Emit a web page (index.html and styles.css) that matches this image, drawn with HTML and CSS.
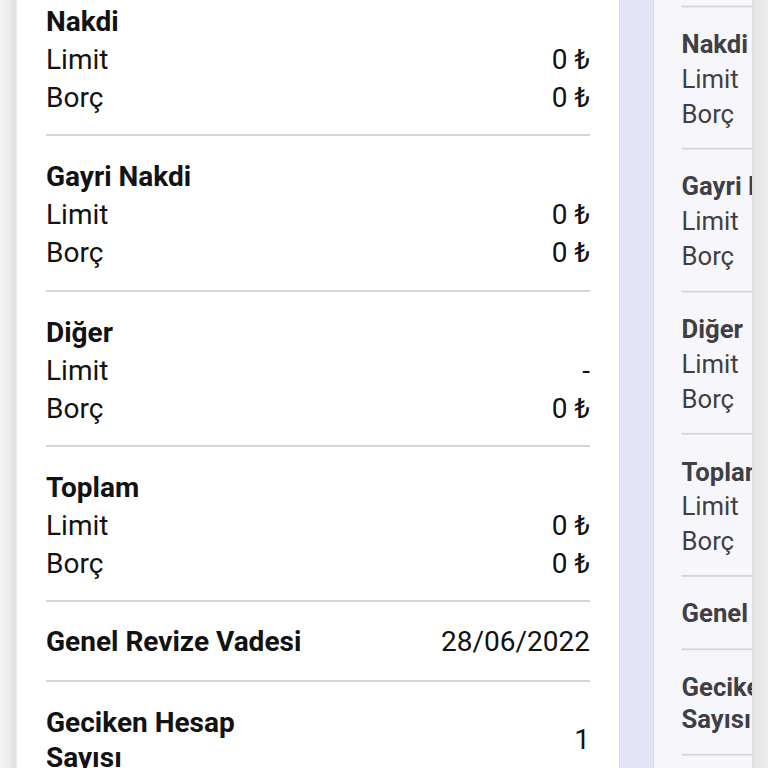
FILE: index.html
```html
<!DOCTYPE html>
<html lang="tr">
<head>
<meta charset="utf-8">
<title>Limitler</title>
<link rel="stylesheet" href="styles.css">
</head>
<body>
<div class="pager">
  <div class="edge edge-left"></div>

  <div class="card card-main">
    <div class="list">
      <div class="top-rule"></div>
      <section class="group">
        <div class="group-title">Nakdi</div>
        <div class="row"><span class="label">Limit</span><span class="value">0 ₺</span></div>
        <div class="row"><span class="label">Borç</span><span class="value">0 ₺</span></div>
      </section>
      <section class="group">
        <div class="group-title">Gayri Nakdi</div>
        <div class="row"><span class="label">Limit</span><span class="value">0 ₺</span></div>
        <div class="row"><span class="label">Borç</span><span class="value">0 ₺</span></div>
      </section>
      <section class="group">
        <div class="group-title">Diğer</div>
        <div class="row"><span class="label">Limit</span><span class="value">-</span></div>
        <div class="row"><span class="label">Borç</span><span class="value">0 ₺</span></div>
      </section>
      <section class="group">
        <div class="group-title">Toplam</div>
        <div class="row"><span class="label">Limit</span><span class="value">0 ₺</span></div>
        <div class="row"><span class="label">Borç</span><span class="value">0 ₺</span></div>
      </section>
      <div class="info-row">
        <span class="info-label">Genel Revize Vadesi</span><span class="value">28/06/2022</span>
      </div>
      <div class="info-row info-row-wrap">
        <span class="info-label">Geciken Hesap Sayısı</span><span class="value">1</span>
      </div>
    </div>
  </div>

  <div class="gap"></div>

  <div class="peek">
    <div class="card card-next">
      <div class="list">
        <div class="top-rule"></div>
        <section class="group">
          <div class="group-title">Nakdi</div>
          <div class="row"><span class="label">Limit</span><span class="value">0 ₺</span></div>
          <div class="row"><span class="label">Borç</span><span class="value">0 ₺</span></div>
        </section>
        <section class="group">
          <div class="group-title">Gayri Nakdi</div>
          <div class="row"><span class="label">Limit</span><span class="value">0 ₺</span></div>
          <div class="row"><span class="label">Borç</span><span class="value">0 ₺</span></div>
        </section>
        <section class="group">
          <div class="group-title">Diğer</div>
          <div class="row"><span class="label">Limit</span><span class="value">-</span></div>
          <div class="row"><span class="label">Borç</span><span class="value">0 ₺</span></div>
        </section>
        <section class="group">
          <div class="group-title">Toplam</div>
          <div class="row"><span class="label">Limit</span><span class="value">0 ₺</span></div>
          <div class="row"><span class="label">Borç</span><span class="value">0 ₺</span></div>
        </section>
        <div class="info-row">
          <span class="info-label">Genel Revize Vadesi</span><span class="value">28/06/2022</span>
        </div>
        <div class="info-row info-row-wrap">
          <span class="info-label">Geciken Hesap Sayısı</span><span class="value">1</span>
        </div>
      </div>
    </div>
  </div>

  <div class="edge edge-right"></div>
</div>
</body>
</html>
```

FILE: styles.css
```css
* { box-sizing: border-box; }

html, body {
  margin: 0;
  padding: 0;
  width: 768px;
  height: 768px;
  overflow: hidden;
  background: #e4e4f7;
  font-family: Roboto, "Noto Sans", "DejaVu Sans", sans-serif;
}

.pager {
  display: flex;
  width: 768px;
  height: 768px;
  overflow: hidden;
}

.edge {
  flex: 0 0 auto;
  height: 100%;
}

.edge-left {
  width: 17px;
  background: linear-gradient(to right, #f4f4f4 0%, #ebebeb 60%, #dedede 88%, #f2f2f2 100%);
}

.edge-right {
  width: 16px;
  background: linear-gradient(to right, #dcdcdc 0%, #e6e6e6 20%, #ededed 100%);
}

.card {
  flex: 0 0 auto;
  height: 100%;
}

.card-main {
  width: 603px;
  background: #ffffff;
  color: #121212;
  padding: 0 29px 0 29px;
  border-right: 1px solid #dcdce6;
}

.gap {
  flex: 0 0 auto;
  width: 33px;
  height: 100%;
  background: #e4e4f7;
}

.peek {
  flex: 0 0 auto;
  width: 99px;
  height: 100%;
  overflow: hidden;
  background: #f7f7fb;
  border-left: 1px solid #d9d9e6;
}

.card-next {
  width: 603px;
  padding: 0 29px 0 30px;
  color: #3f3f44;
  transform: scale(0.917);
  transform-origin: 0 320px;
}

.list {
  margin-top: -21px;
}

.top-rule {
  height: 2px;
  background: #d6d6d6;
}

.group {
  padding: 22px 0 17.33px;
  border-bottom: 2px solid #d6d6d6;
}

.group-title {
  font-size: 28px;
  line-height: 38px;
  font-weight: 700;
  white-space: nowrap;
}

.row {
  display: flex;
  justify-content: space-between;
  font-size: 28px;
  line-height: 38px;
  white-space: nowrap;
}

.value {
  font-size: 28px;
  line-height: 38px;
  white-space: nowrap;
  text-align: right;
}

.info-row {
  display: flex;
  justify-content: space-between;
  align-items: center;
  padding: 21px 0 19px;
  border-bottom: 2px solid #d6d6d6;
}

.info-label {
  font-size: 28px;
  line-height: 38px;
  font-weight: 700;
  flex: 0 1 264px;
}

.info-row-wrap {
  padding: 23px 0 20px;
}

.info-row-wrap .info-label {
  line-height: 35px;
}
```
